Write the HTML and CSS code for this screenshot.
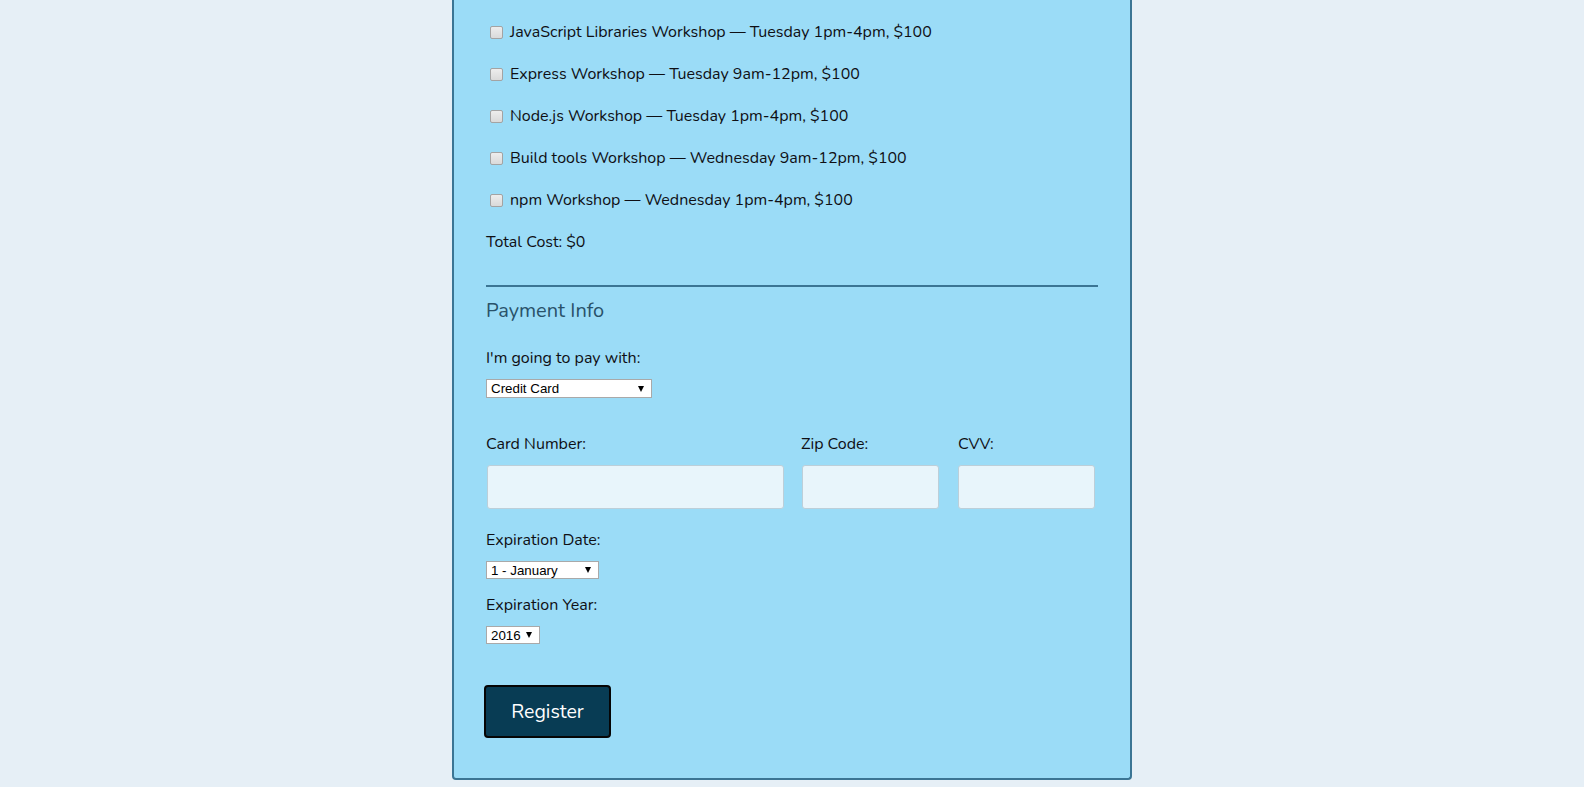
FILE: index.html
```html
<!DOCTYPE html>
<html lang="en">
<head>
<meta charset="utf-8">
<title>Register</title>
<link rel="stylesheet" href="styles.css">
</head>
<body>
<form class="panel">
  <div class="activities">
    <label class="activity"><input type="checkbox"> JavaScript Libraries Workshop — Tuesday 1pm-4pm, $100</label>
    <label class="activity"><input type="checkbox"> Express Workshop — Tuesday 9am-12pm, $100</label>
    <label class="activity"><input type="checkbox"> Node.js Workshop — Tuesday 1pm-4pm, $100</label>
    <label class="activity"><input type="checkbox"> Build tools Workshop — Wednesday 9am-12pm, $100</label>
    <label class="activity"><input type="checkbox"> npm Workshop — Wednesday 1pm-4pm, $100</label>
    <p class="total">Total Cost: $0</p>
  </div>

  <fieldset class="payment">
    <h2 class="legend">Payment Info</h2>
    <label class="field-label" for="payment">I'm going to pay with:</label>
    <span class="select-wrap"><select id="payment" class="select select-pay"><option>Credit Card</option></select></span>

    <div class="card-grid">
      <div class="col">
        <label class="field-label" for="cc-num">Card Number:</label>
        <input id="cc-num" class="text-input input-card" type="text">
      </div>
      <div class="col">
        <label class="field-label" for="zip">Zip Code:</label>
        <input id="zip" class="text-input input-small" type="text">
      </div>
      <div class="col">
        <label class="field-label" for="cvv">CVV:</label>
        <input id="cvv" class="text-input input-small input-cvv" type="text">
      </div>
    </div>

    <label class="field-label label-exp" for="exp-month">Expiration Date:</label>
    <span class="select-wrap select-wrap-sm"><select id="exp-month" class="select select-month"><option>1 - January</option></select></span>

    <label class="field-label label-year" for="exp-year">Expiration Year:</label>
    <span class="select-wrap select-wrap-sm"><select id="exp-year" class="select select-year"><option>2016</option></select></span>
  </fieldset>

  <button class="register" type="submit">Register</button>
</form>
</body>
</html>
```

FILE: styles.css
```css
* { box-sizing: border-box; }

html, body {
  margin: 0;
  padding: 0;
}

body {
  background: #e6eff6;
  font-family: "Nunito", "Lato", "Noto Sans", sans-serif;
  font-size: 16px;
  color: #0f0f14;
}

.panel {
  width: 680px;
  margin: 0 auto;
  background: #9bdcf7;
  border: 2px solid #3b7594;
  border-top: none;
  border-radius: 0 0 4px 4px;
  padding: 11px 32px 41px;
  height: 780px;
}

.activities {
  display: flex;
  flex-direction: column;
}

.activity {
  display: flex;
  align-items: center;
  height: 42px;
  line-height: 20px;
}

.activity input {
  width: 13px;
  height: 13px;
  margin: 0 7px 0 4px;
  appearance: none;
  -webkit-appearance: none;
  background: linear-gradient(#ededed, #dadada);
  border: 1px solid #a3a3a3;
  border-radius: 2px;
}

.total {
  margin: 0;
  height: 42px;
  line-height: 42px;
}

.payment {
  border: none;
  border-top: 2px solid #3b7594;
  margin: 22px 0 0;
  padding: 0;
  display: flex;
  flex-direction: column;
  align-items: flex-start;
}

.legend {
  margin: 12px 0 0;
  font-size: 20px;
  font-weight: 400;
  line-height: 24px;
  color: #29526a;
}

.field-label {
  display: block;
  line-height: 20px;
  margin-top: 25px;
}

.select-wrap {
  position: relative;
  display: inline-block;
  margin-top: 11px;
}

.select-wrap::after {
  content: "";
  position: absolute;
  right: 8px;
  top: 7px;
  border-left: 3px solid transparent;
  border-right: 3px solid transparent;
  border-top: 6px solid #000;
  pointer-events: none;
}

.select-wrap-sm::after { top: 6px; }

.select {
  appearance: none;
  -webkit-appearance: none;
  display: block;
  height: 19px;
  margin: 0;
  padding: 0 16px 0 4px;
  background: #fff;
  border: 1px solid #a9a9a9;
  border-radius: 0;
  font-family: "Liberation Sans", Arial, sans-serif;
  font-size: 13.33px;
  line-height: 17px;
  color: #000;
}

.select-pay { width: 166px; }
.select-month { width: 113px; height: 18px; }
.select-year { width: 54px; height: 18px; }

.card-grid {
  display: grid;
  grid-template-columns: 315px 157px 140px;
  width: 100%;
  margin-top: 36px;
}

.card-grid .field-label {
  margin-top: 0;
}

.text-input {
  display: block;
  height: 44px;
  margin: 11px 0 0 1px;
  background: #e8f5fb;
  border: 1px solid #bccfd9;
  border-radius: 3px;
  font: inherit;
}

.input-card { width: 297px; }
.input-small { width: 137px; }
.input-cvv { margin-left: 0; }

.label-exp { margin-top: 21px; }
.label-year { margin-top: 16px; }

.register {
  display: block;
  width: 127px;
  height: 53px;
  margin-top: 41px;
  margin-left: -2px;
  background: #083c54;
  color: #fff;
  border: 2px solid #050505;
  border-radius: 4px;
  font-family: inherit;
  font-size: 19.5px;
}
```
